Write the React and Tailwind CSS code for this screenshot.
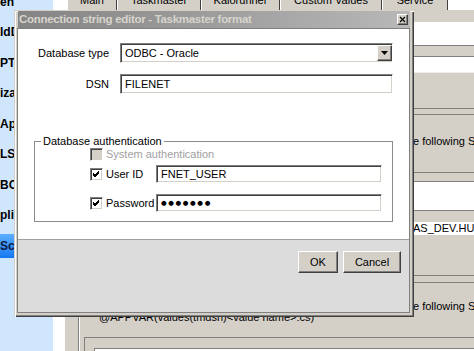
import React from "react";

const sideItems = ["en", "ldDe", "PT", "iza", "Ap", "LS", "BCC", "plic", "Sca"];

const tabs = [
  { label: "Main", w: "w-[50px]" },
  { label: "Taskmaster", w: "w-[84px]" },
  { label: "Kalorunner", w: "w-[79px]" },
  { label: "Custom Values", w: "w-[102px]" },
  { label: "Service", w: "w-[66px]" },
];

const sunken =
  "border border-t-[#808080] border-l-[#808080] border-r-white border-b-white shadow-[inset_1px_1px_0_#404040,inset_-1px_-1px_0_#d4d0c8]";

const raised =
  "border border-t-white border-l-white border-r-[#404040] border-b-[#404040] shadow-[inset_-1px_-1px_0_#808080]";

function Checkbox({ checked, disabled }) {
  return (
    <div className={`h-[13px] w-[13px] shrink-0 ${sunken} ${disabled ? "bg-[#d4d0c8]" : "bg-white"}`}>
      {checked && (
        <svg width="11" height="11" viewBox="0 0 11 11" className="block">
          <path d="M2 4 L4 6 L8 2 M2 5 L4 7 L8 3 M2 6 L4 8 L8 4" stroke="#000" strokeWidth="1" fill="none" shapeRendering="crispEdges" />
        </svg>
      )}
    </div>
  );
}

function Dialog() {
  return (
    <div className="absolute left-[14px] top-[10px] flex h-[307px] w-[400px] flex-col bg-[#d4d0c8] pb-[4px] pl-[3px] pr-[4px] pt-[1px] shadow-[inset_1px_1px_0_#d4d0c8,inset_2px_2px_0_#fff,inset_-1px_-1px_0_#404040,inset_-2px_-2px_0_#808080]">
      {/* title bar */}
      <div className="ml-[1px] flex h-[17px] items-center justify-between bg-gradient-to-r from-[#848484] to-[#b8b8b8] pl-[1px] pr-[2px]">
        <span className="text-[11.5px] font-bold tracking-[-0.3px] text-[#d8d4cc]">
          Connection string editor - Taskmaster format
        </span>
        <div className={`flex h-[11px] w-[11px] items-center justify-center bg-[#d4d0c8] ${raised}`}>
          <svg width="7" height="7" viewBox="0 0 7 7">
            <path d="M1 1 L6 6 M6 1 L1 6" stroke="#000" strokeWidth="1.2" />
          </svg>
        </div>
      </div>

      {/* client */}
      <div className="flex flex-1 flex-col border border-[#808080]">
        <div className="flex h-[210px] flex-col bg-white pt-[14px]">
          <div className="flex items-center">
            <div className="w-[91px] text-right">Database type</div>
            <div className={`ml-[11px] flex h-[20px] w-[273px] items-center bg-white pl-[4px] ${sunken}`}>
              <span className="flex-1">ODBC - Oracle</span>
              <div className={`flex h-[16px] w-[15px] items-center justify-center bg-[#d4d0c8] ${raised}`}>
                <svg width="7" height="4" viewBox="0 0 7 4">
                  <path d="M0 0 H7 L3.5 4 Z" fill="#000" />
                </svg>
              </div>
            </div>
          </div>

          <div className="mt-[11px] flex items-center">
            <div className="w-[91px] text-right">DSN</div>
            <div className={`ml-[11px] flex h-[20px] w-[273px] items-center bg-white pl-[4px] ${sunken}`}>
              FILENET
            </div>
          </div>

          <fieldset className="ml-[16px] mt-[41px] w-[359px] border border-[#8c8c8c] pb-[9px]">
            <legend className="ml-[6px] px-[2px]">Database authentication</legend>
            <div className="pl-[55px]">
              <div className="flex h-[13px] items-center">
                <Checkbox disabled />
                <span className="ml-[3px] text-[#a0a0a0]">System authentication</span>
              </div>
              <div className="mt-[4px] flex items-center">
                <div className="flex w-[66px] items-center">
                  <Checkbox checked />
                  <span className="ml-[3px]">User ID</span>
                </div>
                <div className={`flex h-[18px] w-[226px] items-center bg-white pl-[4px] ${sunken}`}>
                  FNET_USER
                </div>
              </div>
              <div className="mt-[11px] flex items-center">
                <div className="flex w-[66px] items-center">
                  <Checkbox checked />
                  <span className="ml-[3px]">Password</span>
                </div>
                <div className={`flex h-[18px] w-[226px] items-center bg-white pl-[4px] font-['DejaVu_Sans',sans-serif] text-[6.5px] tracking-[1.6px] ${sunken}`}>
                  ●●●●●●●
                </div>
              </div>
            </div>
          </fieldset>
        </div>

        <div className="flex flex-1 items-start justify-end gap-[5px] border-t border-[#a0a0a0] bg-[#dcdcdc] pr-[8px] pt-[11px]">
          <button className={`h-[22px] w-[40px] bg-[#d4d0c8] ${raised}`}>OK</button>
          <button className={`h-[22px] w-[58px] bg-[#d4d0c8] ${raised}`}>Cancel</button>
        </div>
      </div>
    </div>
  );
}

export default function App() {
  return (
    <div className="relative flex h-[351px] w-[474px] overflow-hidden bg-white font-['Liberation_Sans',Arial,sans-serif] text-[11px] leading-[13px] text-black">
      {/* sidebar */}
      <aside className="w-[53px] shrink-0 overflow-hidden bg-[#cfe6fd]">
        <div className="-mt-[13px]">
          {sideItems.map((t, i) => (
            <div key={t} className="flex h-[30.5px] items-center">
              <div
                className={`flex h-[24px] w-full items-center text-[12px] font-bold ${
                  i === sideItems.length - 1 ? "bg-gradient-to-b from-[#5aaeff] to-[#1478f0] text-[#0a1a40]" : ""
                }`}
              >
                {t}
              </div>
            </div>
          ))}
        </div>
      </aside>

      <div className="w-[12px] shrink-0 bg-white" />

      {/* main column */}
      <div className="flex flex-1 flex-col">
        <div className="-mt-[10px] flex h-[20px] shrink-0 pl-[2px]">
          {tabs.map((t) => (
            <div
              key={t.label}
              className={`${t.w} flex items-center justify-center border-l border-r border-l-white border-r-[#404040] bg-[#d4d0c8]`}
            >
              {t.label}
            </div>
          ))}
        </div>

        <div className="flex flex-1 bg-[#d4d0c8] pl-[13px]">
          <div className="flex flex-1 flex-col border-l border-[#808080] shadow-[inset_1px_0_0_#fff]">
            <div className="h-[12px]" />
            <div className="ml-[10px] h-[23px] bg-white" />
            <div className="h-[12px] border-b border-t border-[#808080]" />
            <div className="ml-[10px] h-[15px] bg-white" />
            <div className="h-[36px] border-t border-[#eeeeee]" />
            <div className="h-[7px] border-b border-t border-[#808080]" />
            <div className="h-[57px] pl-[334px] pt-[20px]">e following Snippets</div>
            <div className="h-[10px] border-b border-t border-[#808080]" />
            <div className="ml-[10px] h-[28px] bg-white" />
            <div className="h-[12px] border-t border-[#808080]" />
            <div className="ml-[10px] flex h-[13px] items-center bg-white pl-[324px]">AS_DEV.HUNGARY</div>
            <div className="h-[40px]" />
            <div className="h-[8px] border-b border-t border-[#808080]" />
            <div className="h-[54px] pt-[17px]">
              <div className="pl-[334px]">e following Snippets</div>
              <div className="-mt-[2px] pl-[20px]">@APPVAR(values(tmdsh)&lt;value name&gt;:cs)</div>
            </div>
            <div className="ml-[5px] flex flex-1 flex-col border-l border-t border-[#808080] pl-[9px] pt-[10px]">
              <div className="flex-1 border-l border-t border-[#808080] bg-white" />
            </div>
          </div>
        </div>
      </div>

      <Dialog />
    </div>
  );
}
